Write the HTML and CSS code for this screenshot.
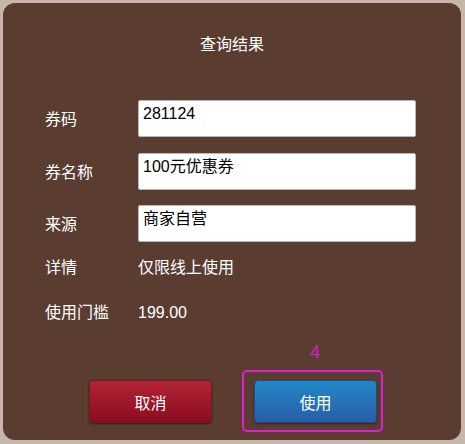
FILE: index.html
```html
<!DOCTYPE html>
<html lang="zh-CN">
<head>
<meta charset="utf-8">
<title>查询结果</title>
<link rel="stylesheet" href="styles.css">
</head>
<body>
<div class="panel">
  <div class="title">查询结果</div>
  <div class="form">
    <div class="row">
      <div class="label">券码</div>
      <div class="field">281124</div>
    </div>
    <div class="row">
      <div class="label">券名称</div>
      <div class="field">100元优惠券</div>
    </div>
    <div class="row">
      <div class="label">来源</div>
      <div class="field">商家自营</div>
    </div>
    <div class="row row-text">
      <div class="label">详情</div>
      <div class="value">仅限线上使用</div>
    </div>
    <div class="row row-text">
      <div class="label">使用门槛</div>
      <div class="value">199.00</div>
    </div>
  </div>
  <div class="actions">
    <button class="btn btn-cancel">取消</button>
    <div class="highlight-wrap">
      <button class="btn btn-use">使用</button>
      <span class="highlight"></span>
      <span class="step">4</span>
    </div>
  </div>
</div>
</body>
</html>
```

FILE: styles.css
```css
html, body {
  margin: 0;
  padding: 0;
}
body {
  background: #c6b5ab;
  font-family: "Liberation Sans", "Noto Sans CJK SC", sans-serif;
  font-size: 16px;
  color: #fff;
}
.panel {
  margin: 3px;
  width: 458px;
  height: 437px;
  background: #5a3c30;
  border-radius: 12px;
  box-sizing: border-box;
  padding-top: 32px;
}
.title {
  text-align: center;
  line-height: 20px;
  height: 20px;
  font-size: 16px;
}
.form {
  margin-top: 45px;
  padding-left: 42px;
  display: flex;
  flex-direction: column;
}
.row {
  display: grid;
  grid-template-columns: 93px 278px;
  align-items: center;
  margin-bottom: 15.5px;
}
.label {
  line-height: 20px;
  padding-top: 3px;
}
.field {
  box-sizing: border-box;
  height: 37px;
  background: #fff;
  border: 1px solid #b8b8b8;
  border-radius: 2px;
  color: #000;
  line-height: 20px;
  padding: 3px 4px 0;
}
.row-text {
  height: 45px;
  margin-bottom: 0;
}
.row-text .label {
  padding-top: 0;
}
.value {
  line-height: 20px;
}
.form .row:nth-child(3) {
  margin-bottom: 3.5px;
}
.actions {
  margin-top: 44.5px;
  display: flex;
  justify-content: center;
  gap: 42px;
  padding-left: 2px;
}
.btn {
  width: 123px;
  height: 43px;
  border-radius: 4px;
  font-family: inherit;
  font-size: 16px;
  color: #fff;
  padding: 0;
  box-shadow: 0 1px 2px rgba(0, 0, 0, 0.45);
  cursor: pointer;
}
.btn-cancel {
  background: linear-gradient(#b32435, #8a0d1f);
  border: 1px solid #6e1a1f;
}
.btn-use {
  background: linear-gradient(#2189c5, #2a5caa);
  border: 1px solid #234a78;
}
.highlight-wrap {
  position: relative;
  display: flex;
}
.highlight {
  position: absolute;
  left: -12px;
  right: -6px;
  top: -10px;
  bottom: -9px;
  border: 2px solid #e11ed6;
  border-radius: 5px;
  pointer-events: none;
}
.step {
  position: absolute;
  left: 56px;
  top: -38px;
  color: #d41cc9;
  font-size: 18px;
  line-height: 20px;
}
```
